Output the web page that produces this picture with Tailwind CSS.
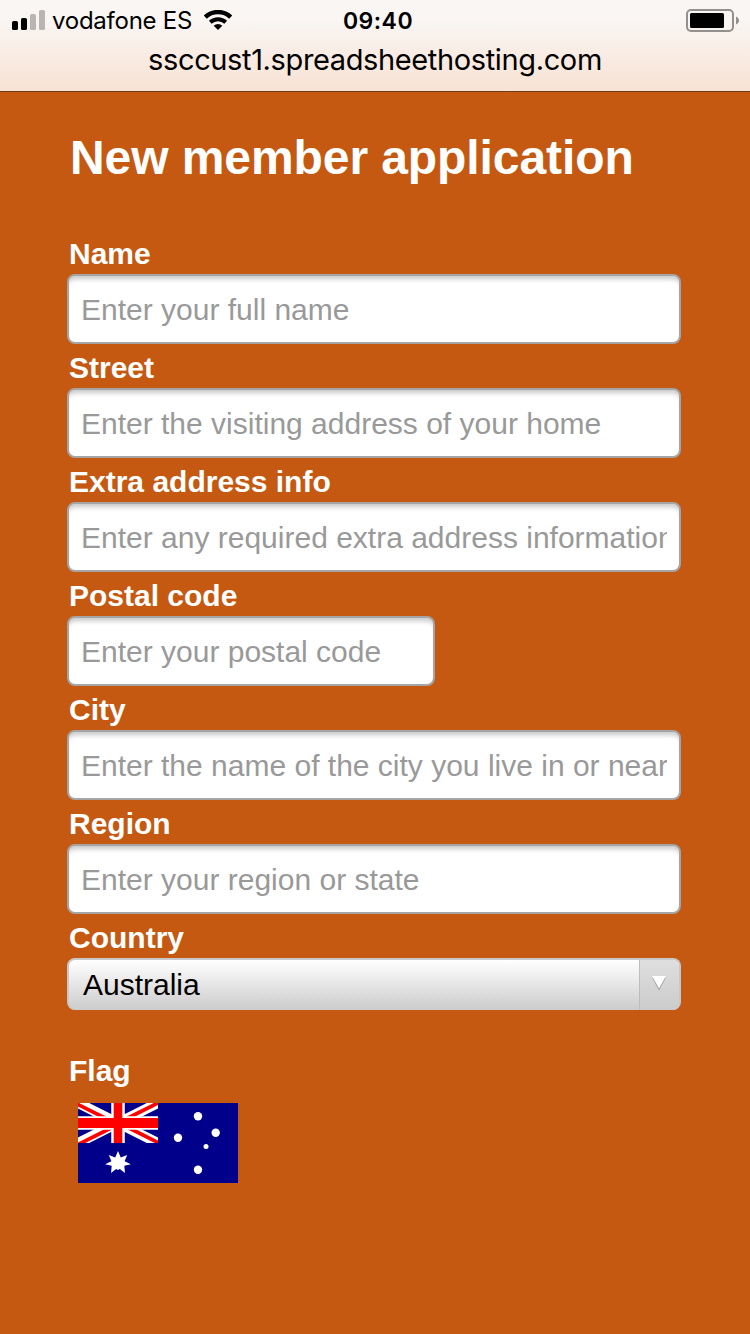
<!DOCTYPE html>
<html lang="en">
<head>
    <meta charset="UTF-8">
    <meta name="viewport" content="width=device-width, initial-scale=1.0">
    <title>New member application</title>
    <script src="https://cdn.jsdelivr.net/npm/@tailwindcss/browser@4"></script>
</head>
<body class="bg-[#c55911] h-[1334px] overflow-hidden font-['Liberation_Sans',Arial,sans-serif]">
    <header class="h-[92px] border-b border-[#6f3b1c] bg-linear-to-b from-[#f9f6f4] from-20% to-[#f8e2d4] text-black font-['Inter',sans-serif]">
        <div class="grid grid-cols-3 items-center h-10 pl-3 pr-[11px]">
            <div class="flex items-center">
                <svg class="w-[33px] h-5" viewBox="0 0 33 20">
                    <rect x="0" y="11" width="6" height="9" rx="1.6"/>
                    <rect x="9" y="8" width="6" height="12" rx="1.6"/>
                    <rect x="18" y="4" width="6" height="16" rx="1.6" fill="#bab5b2"/>
                    <rect x="27" y="0" width="6" height="20" rx="1.6" fill="#bab5b2"/>
                </svg>
                <span class="ml-[7px] pt-0.5 text-[24px] leading-[38px] tracking-[-0.25px] whitespace-nowrap">vodafone ES</span>
                <svg class="ml-3 w-7 h-5 shrink-0" viewBox="0 0 28 20" fill="none" stroke="#000">
                    <path d="M1.300 7.100a18.400 18.400 0 0 1 25.400 0" stroke-width="4.400"/>
                    <path d="M6.300 12.200a11.200 11.200 0 0 1 15.400 0" stroke-width="4"/>
                    <path d="M14 20l-4.300-4.300a6.300 6.300 0 0 1 8.600 0z" fill="#000" stroke="none"/>
                </svg>
            </div>
            <div class="pt-0.5 pl-[5px] text-center text-[23px] leading-[38px] font-semibold tracking-[0.5px]">09:40</div>
            <svg class="justify-self-end w-[53px] h-[23px]" viewBox="0 0 53 23">
                <rect x="1" y="1" width="46" height="21" rx="4" fill="none" stroke="#93908e" stroke-width="2"/>
                <rect x="4" y="4" width="34" height="15" rx="1.500"/>
                <path d="M50 7.500c4 1.500 4 6.500 0 8z" fill="#93908e"/>
            </svg>
        </div>
        <div class="text-center text-[29px] leading-10 tracking-[-0.37px]">ssccust1.spreadsheethosting.com</div>
    </header>

    <main class="pl-[67px] pr-[69px]">
        <h1 class="pt-[38px] pl-[3px] text-[48px] leading-[56px] tracking-[-0.08px] font-bold text-white whitespace-nowrap">New member application</h1>

        <form class="mt-11">
            <label for="name" class="block h-11 pt-1 pl-0.5 text-[30px] leading-10 font-bold text-white">Name</label>
            <input type="text" id="name" placeholder="Enter your full name" class="block w-full h-[70px] px-3 pt-0.5 border-2 border-[#a5a5a5] rounded-lg bg-white text-[30px] placeholder:text-[#999999] shadow-[inset_0_6px_5px_-3px_#c8c8c8]">

            <label for="street" class="block h-11 pt-1 pl-0.5 text-[30px] leading-10 font-bold text-white">Street</label>
            <input type="text" id="street" placeholder="Enter the visiting address of your home" class="block w-full h-[70px] px-3 pt-0.5 border-2 border-[#a5a5a5] rounded-lg bg-white text-[30px] placeholder:text-[#999999] shadow-[inset_0_6px_5px_-3px_#c8c8c8]">

            <label for="extra" class="block h-11 pt-1 pl-0.5 text-[30px] leading-10 font-bold text-white">Extra address info</label>
            <input type="text" id="extra" placeholder="Enter any required extra address information" class="block w-full h-[70px] px-3 pt-0.5 border-2 border-[#a5a5a5] rounded-lg bg-white text-[30px] placeholder:text-[#999999] shadow-[inset_0_6px_5px_-3px_#c8c8c8]">

            <label for="postal" class="block h-11 pt-1 pl-0.5 text-[30px] leading-10 font-bold text-white">Postal code</label>
            <input type="text" id="postal" placeholder="Enter your postal code" class="block w-[368px] h-[70px] px-3 pt-0.5 border-2 border-[#a5a5a5] rounded-lg bg-white text-[30px] placeholder:text-[#999999] shadow-[inset_0_6px_5px_-3px_#c8c8c8]">

            <label for="city" class="block h-11 pt-1 pl-0.5 text-[30px] leading-10 font-bold text-white">City</label>
            <input type="text" id="city" placeholder="Enter the name of the city you live in or near" class="block w-full h-[70px] px-3 pt-0.5 border-2 border-[#a5a5a5] rounded-lg bg-white text-[30px] placeholder:text-[#999999] shadow-[inset_0_6px_5px_-3px_#c8c8c8]">

            <label for="region" class="block h-11 pt-1 pl-0.5 text-[30px] leading-10 font-bold text-white">Region</label>
            <input type="text" id="region" placeholder="Enter your region or state" class="block w-full h-[70px] px-3 pt-0.5 border-2 border-[#a5a5a5] rounded-lg bg-white text-[30px] placeholder:text-[#999999] shadow-[inset_0_6px_5px_-3px_#c8c8c8]">

            <div class="h-11 pt-1 pl-0.5 text-[30px] leading-10 font-bold text-white">Country</div>
            <button type="button" class="flex w-full h-[52px] border-2 border-b-0 border-[#c8c8c8] rounded-lg overflow-hidden bg-linear-to-b from-white to-[#cccccc] text-left">
                <span class="grow pl-3.5 text-[30px] leading-[50px] text-black">Australia</span>
                <span class="w-10 h-full pt-4 pl-[11px] border-l border-[#bdbdbd] bg-linear-to-b from-[#dfdfdf] to-[#cbcbcb]">
                    <svg class="w-4 h-[15px]" viewBox="0 0 16 15">
                        <path d="M1 1.500h14L8 14.500z" fill="#a0a0a0"/>
                        <path d="M1 0h14L8 12.500z" fill="#fff"/>
                    </svg>
                </span>
            </button>

            <div class="mt-[41px] pl-0.5 text-[30px] leading-10 font-bold text-white">Flag</div>
            <svg class="block mt-3 ml-[11px] w-40 h-20" viewBox="0 0 160 80">
                <defs>
                    <clipPath id="canton"><path d="M0 0h80v40H0z"/></clipPath>
                    <filter id="soft" filterUnits="userSpaceOnUse" x="-10" y="-10" width="180" height="100"><feGaussianBlur stdDeviation="0.7"/></filter>
                </defs>
                <path d="M0 0h160v80H0z" fill="#00008b"/>
                <g clip-path="url(#canton)">
                    <g filter="url(#soft)">
                        <path d="M-8-4l96 48M88-4L-8 44" stroke="#fff" stroke-width="10"/>
                        <path d="M-8-2.500L40 21.500M88-4L40 20M40 19.500l48 24M40 21.500L-8 45.500" stroke="#f00" stroke-width="3.800"/>
                        <path d="M40-4v48M-4 20h88" stroke="#fff" stroke-width="13.500"/>
                    </g>
                    <path d="M40 0v40" stroke="#f00" stroke-width="8.600"/>
                    <path d="M0 20h80" stroke="#f00" stroke-width="10"/>
                </g>
                <g fill="#fff" filter="url(#soft)">
                    <path d="M40 48l2.800 6.400 6.400-2.300-2.600 6.200 6.300 2.900-6.600 1.500.7 7.300-5.200-4-1.800 1-1.800-1-5.200 4 .7-7.300-6.600-1.500 6.300-2.900-2.600-6.200 6.400 2.300z"/>
                    <circle cx="120" cy="13.300" r="4.200"/>
                    <circle cx="100" cy="34.800" r="4.200"/>
                    <circle cx="137.700" cy="29.700" r="4.200"/>
                    <circle cx="120" cy="66.700" r="4.200"/>
                    <circle cx="128" cy="43.500" r="2.500"/>
                </g>
            </svg>
        </form>
    </main>
</body>
</html>
